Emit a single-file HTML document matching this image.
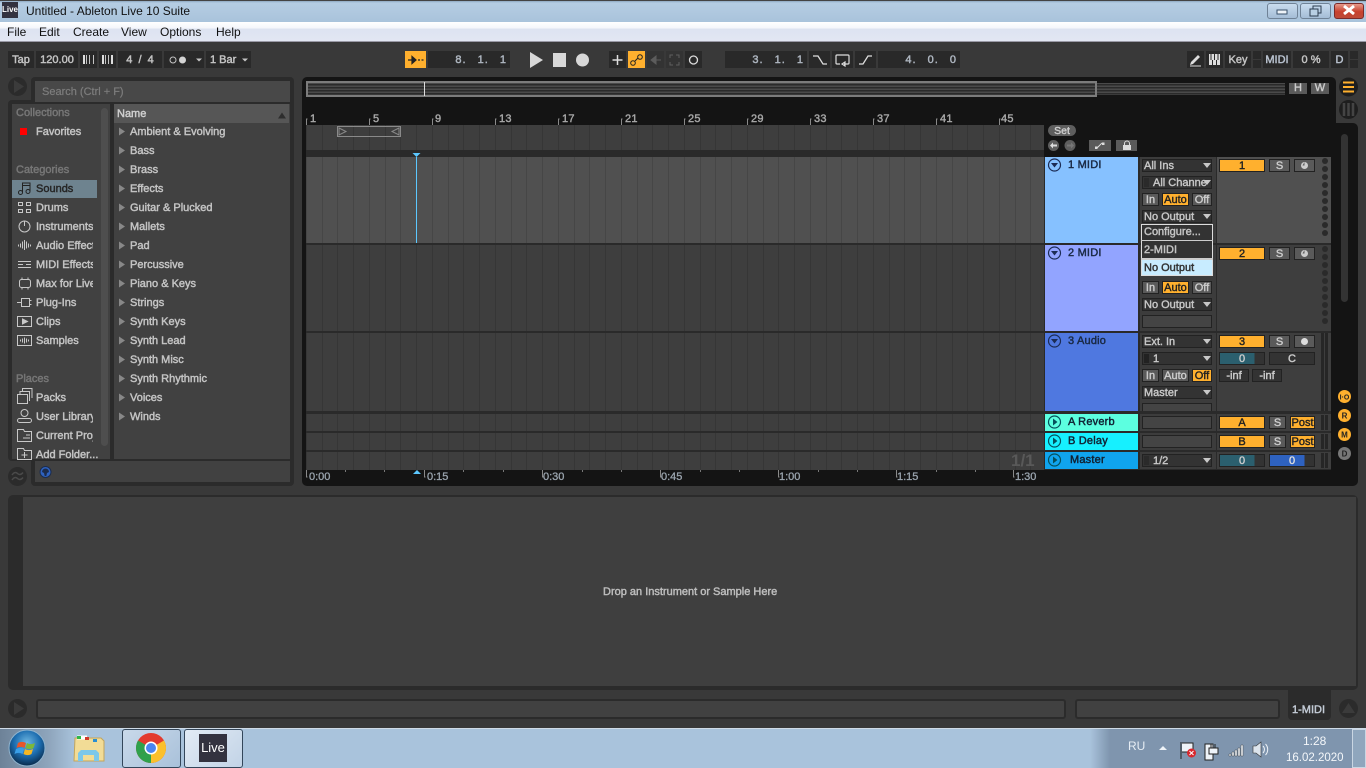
<!DOCTYPE html>
<html><head><meta charset="utf-8"><title>Untitled - Ableton Live 10 Suite</title>
<style>
html,body{margin:0;padding:0;width:1366px;height:768px;overflow:hidden;background:#393939;font-family:"Liberation Sans",sans-serif}
div,span.a{position:absolute;box-sizing:border-box}
.t{position:absolute;white-space:nowrap;font:11px/14px "Liberation Sans",sans-serif;-webkit-text-stroke:.45px;color:#c4c4c4;margin-top:1px}
.z{margin-top:0}
.k{position:absolute;box-sizing:border-box;background:#292929;color:#c4c4c4;font:11px/18px "Liberation Sans",sans-serif;-webkit-text-stroke:.45px;text-align:center;top:51px;height:17px;white-space:nowrap}
.m{position:absolute;white-space:nowrap;font:12px/16px "Liberation Sans",sans-serif;color:#111;top:24px}
.s{color:#9a9a9a}
.h{color:#777}
.b{position:absolute;box-sizing:border-box;height:13px;background:#5a5a5a;border:1px solid #222;color:#ccc;font:11px/12px "Liberation Sans",sans-serif;-webkit-text-stroke:.4px;text-align:center;white-space:nowrap;overflow:hidden}
.o{background:#ffb02e;color:#222}
.c{position:absolute;box-sizing:border-box;height:13px;background:#333;border:1px solid #222;color:#c8c8c8;font:11px/12px "Liberation Sans",sans-serif;-webkit-text-stroke:.4px;padding-left:1px;white-space:nowrap;overflow:hidden}
.g{background-image:repeating-linear-gradient(90deg,rgba(0,0,0,.12) 0 1px,transparent 1px 16px,rgba(0,0,0,.12) 16px 17px,transparent 17px 31px,rgba(0,0,0,.12) 31px 32px,transparent 32px 47px,rgba(0,0,0,.12) 47px 48px,transparent 48px 63px)}
.n{position:absolute;white-space:nowrap;font:11px/12px "Liberation Sans",sans-serif;-webkit-text-stroke:.45px;color:#1a2a44;letter-spacing:.2px}
.r{position:absolute;top:113px;font:11px/13px "Liberation Sans",sans-serif;-webkit-text-stroke:.4px;color:#a8a8a8;letter-spacing:.3px}
.l{position:absolute;top:470px;font:11px/14px "Liberation Sans",sans-serif;-webkit-text-stroke:.3px;color:#9aa4ae}
</style></head><body>

<!-- Window chrome -->
<div style="left:0;top:0;width:1366px;height:22px;background:linear-gradient(#8fa9c2 0,#b5cde3 2px,#a9c3db 100%);border-top:1px solid #444"></div>
<div style="left:0;top:22px;width:1366px;height:20px;background:linear-gradient(#fff 0,#f4f6fb 6px,#dde3f1 7px,#e2e7f3 100%);border-bottom:1px solid #9a9aa6"></div>
<div style="left:2px;top:2px;width:16px;height:16px;background:#33323f;color:#fff;font:bold 8px/16px 'Liberation Sans',sans-serif;text-align:center">Live</div>
<span class="m" style="left:26px;top:3px">Untitled - Ableton Live 10 Suite</span>
<span class="m" style="left:7px">File</span><span class="m" style="left:39px">Edit</span><span class="m" style="left:73px">Create</span><span class="m" style="left:121px">View</span><span class="m" style="left:160px">Options</span><span class="m" style="left:216px">Help</span>
<div style="left:1267px;top:3px;width:31px;height:16px;border:1px solid #6f8296;border-radius:3px;background:linear-gradient(#c9dcef,#a4bdd6)"></div>
<div style="left:1300px;top:3px;width:31px;height:16px;border:1px solid #6f8296;border-radius:3px;background:linear-gradient(#c9dcef,#a4bdd6)"></div>
<div style="left:1334px;top:3px;width:30px;height:16px;border:1px solid #7a2a2a;border-radius:3px;background:linear-gradient(#e59a8a,#c8402e 55%,#bd4a38)"></div>

<!-- Transport -->
<span class="k" style="left:8px;width:26px">Tap</span>
<span class="k" style="left:36px;width:42px">120.00</span>
<span class="k" style="left:80px;width:17px"></span>
<span class="k" style="left:99px;width:17px"></span>
<span class="k" style="left:118px;width:44px;word-spacing:3px">4 / 4</span>
<span class="k" style="left:164px;width:40px"></span>
<span class="k" style="left:206px;width:45px;text-align:left;padding-left:4px">1 Bar</span>
<span class="k" style="left:405px;width:21px;background:#ffb02e"></span>
<span class="k" style="left:428px;width:82px;text-align:right;padding-right:3px;letter-spacing:1px;word-spacing:7px;color:#aeb6c0">8. 1. 1</span>
<span class="k" style="left:609px;width:17px"></span>
<span class="k" style="left:628px;width:17px;background:#ffb02e"></span>
<span class="k" style="left:647px;width:17px;background:#333"></span>
<span class="k" style="left:666px;width:17px;background:#333"></span>
<span class="k" style="left:685px;width:17px"></span>
<span class="k" style="left:725px;width:82px;text-align:right;padding-right:3px;letter-spacing:1px;word-spacing:7px;color:#aeb6c0">3. 1. 1</span>
<span class="k" style="left:809px;width:21px"></span>
<span class="k" style="left:832px;width:21px"></span>
<span class="k" style="left:855px;width:21px"></span>
<span class="k" style="left:878px;width:82px;text-align:right;padding-right:3px;letter-spacing:1px;word-spacing:7px;color:#aeb6c0">4. 0. 0</span>
<span class="k" style="left:1187px;width:17px"></span>
<span class="k" style="left:1206px;width:17px"></span>
<span class="k" style="left:1225px;width:26px">Key</span>
<span class="k" style="left:1253px;width:8px;height:8px"></span>
<span class="k" style="left:1253px;top:60px;width:8px;height:8px"></span>
<span class="k" style="left:1263px;width:28px;color:#b9c2cf">MIDI</span>
<span class="k" style="left:1293px;width:36px">0 %</span>
<span class="k" style="left:1331px;width:17px;color:#b9c2cf">D</span>
<span class="k" style="left:1350px;width:8px;height:8px"></span>
<span class="k" style="left:1350px;top:60px;width:8px;height:8px"></span>

<!-- Browser -->
<div style="left:31px;top:77px;width:263px;height:30px;background:#2b2b2b;border-radius:4px 4px 0 0"></div>
<div style="left:8px;top:100px;width:286px;height:361px;background:#2b2b2b;border-radius:4px 0 0 4px"></div>
<div style="left:31px;top:455px;width:263px;height:31px;background:#2b2b2b;border-radius:0 0 4px 4px"></div>
<div style="left:35px;top:81px;width:255px;height:21px;background:#484848"></div>
<span class="t z" style="left:42px;top:85px;color:#7d7d7d;-webkit-text-stroke:.2px">Search (Ctrl + F)</span>
<div style="left:12px;top:104px;width:98px;height:355px;background:#414141"></div>
<div style="left:101px;top:108px;width:7px;height:338px;background:#4e4e4e;border-radius:4px"></div>
<div style="left:114px;top:104px;width:176px;height:355px;background:#414141"></div>
<div style="left:114px;top:104px;width:175px;height:19px;background:#565656"></div>
<div style="left:35px;top:461px;width:255px;height:21px;background:#414141"></div>
<div style="left:12px;top:180px;width:85px;height:18px;background:#6e838f"></div>
<span class="t" style="left:117px;top:106px;color:#cfcfcf">Name</span>
<span class="t h" style="left:16px;top:105px">Collections</span>
<span class="t" style="left:36px;top:124px">Favorites</span>
<span class="t h" style="left:16px;top:162px">Categories</span>
<span class="t" style="left:36px;top:181px;color:#262626">Sounds</span>
<span class="t" style="left:36px;top:200px">Drums</span>
<span class="t" style="left:36px;top:219px;width:57px;overflow:hidden">Instruments</span>
<span class="t" style="left:36px;top:238px;width:57px;overflow:hidden">Audio Effects</span>
<span class="t" style="left:36px;top:257px;width:57px;overflow:hidden">MIDI Effects</span>
<span class="t" style="left:36px;top:276px;width:57px;overflow:hidden">Max for Live</span>
<span class="t" style="left:36px;top:295px">Plug-Ins</span>
<span class="t" style="left:36px;top:314px">Clips</span>
<span class="t" style="left:36px;top:333px">Samples</span>
<span class="t h" style="left:16px;top:371px">Places</span>
<span class="t" style="left:36px;top:390px">Packs</span>
<span class="t" style="left:36px;top:409px;width:57px;overflow:hidden">User Library</span>
<span class="t" style="left:36px;top:428px;width:57px;overflow:hidden">Current Project</span>
<span class="t" style="left:36px;top:447px">Add Folder...</span>
<span class="t" style="left:130px;top:124px">Ambient &amp; Evolving</span>
<span class="t" style="left:130px;top:143px">Bass</span>
<span class="t" style="left:130px;top:162px">Brass</span>
<span class="t" style="left:130px;top:181px">Effects</span>
<span class="t" style="left:130px;top:200px">Guitar &amp; Plucked</span>
<span class="t" style="left:130px;top:219px">Mallets</span>
<span class="t" style="left:130px;top:238px">Pad</span>
<span class="t" style="left:130px;top:257px">Percussive</span>
<span class="t" style="left:130px;top:276px">Piano &amp; Keys</span>
<span class="t" style="left:130px;top:295px">Strings</span>
<span class="t" style="left:130px;top:314px">Synth Keys</span>
<span class="t" style="left:130px;top:333px">Synth Lead</span>
<span class="t" style="left:130px;top:352px">Synth Misc</span>
<span class="t" style="left:130px;top:371px">Synth Rhythmic</span>
<span class="t" style="left:130px;top:390px">Voices</span>
<span class="t" style="left:130px;top:409px">Winds</span>

<!-- Arrangement -->
<div style="left:302px;top:77px;width:1034px;height:409px;background:#141414;border-radius:5px"></div>
<div style="left:1320px;top:123px;width:38px;height:363px;background:#141414;border-radius:0 5px 5px 0"></div>
<div style="left:306px;top:150px;width:1025px;height:320px;background:#2a2a2a"></div>
<div style="left:1044px;top:125px;width:287px;height:32px;background:#141414"></div>
<div style="left:306px;top:83px;width:979px;height:12px;background:repeating-linear-gradient(#4a4a4a 0 1px,#2a2a2a 1px 2px,#3a3a3a 2px 3px)"></div>
<div style="left:306px;top:81px;width:791px;height:16px;border:2px solid #7c7c7c"></div>
<div style="left:424px;top:82px;width:1px;height:14px;background:#ddd"></div>
<div class="b" style="left:1289px;top:83px;width:18px;height:11px;line-height:10px;border:0">H</div>
<div class="b" style="left:1311px;top:83px;width:18px;height:11px;line-height:10px;border:0">W</div>
<span class="r" style="left:310px">1</span><span class="r" style="left:373px">5</span><span class="r" style="left:435px">9</span><span class="r" style="left:499px">13</span><span class="r" style="left:562px">17</span><span class="r" style="left:625px">21</span><span class="r" style="left:688px">25</span><span class="r" style="left:751px">29</span><span class="r" style="left:814px">33</span><span class="r" style="left:877px">37</span><span class="r" style="left:940px">41</span><span class="r" style="left:1001px">45</span>
<div class="g" style="left:306px;top:125px;width:738px;height:25px;background-color:#3e3e3e"></div>
<div class="g" style="left:306px;top:157px;width:738px;height:86px;background-color:#505050"></div>
<div class="g" style="left:306px;top:245px;width:738px;height:86px;background-color:#3e3e3e"></div>
<div class="g" style="left:306px;top:333px;width:738px;height:78px;background-color:#3e3e3e"></div>
<div class="g" style="left:306px;top:414px;width:738px;height:17px;background-color:#3e3e3e"></div>
<div class="g" style="left:306px;top:433px;width:738px;height:17px;background-color:#3e3e3e"></div>
<div class="g" style="left:306px;top:452px;width:738px;height:18px;background-color:#3e3e3e"></div>
<div style="left:337px;top:126px;width:64px;height:11px;border:1px solid #8a8a8a"></div>
<div style="left:416px;top:157px;width:1px;height:86px;background:#5cc8ff"></div>
<span class="t z" style="left:1011px;top:452px;font-size:17px;line-height:17px;font-weight:bold;-webkit-text-stroke:0;color:#595959">1/1</span>
<span class="l" style="left:309px">0:00</span><span class="l" style="left:427px">0:15</span><span class="l" style="left:543px">0:30</span><span class="l" style="left:661px">0:45</span><span class="l" style="left:779px">1:00</span><span class="l" style="left:897px">1:15</span><span class="l" style="left:1015px">1:30</span>

<!-- Scene/locators -->
<div style="left:1048px;top:125px;width:28px;height:11px;background:#5e5e5e;border-radius:6px;color:#ccc;font:10.5px/12px 'Liberation Sans',sans-serif;-webkit-text-stroke:.4px;text-align:center">Set</div>
<div style="left:1089px;top:140px;width:22px;height:11px;background:#5a5a5a"></div>
<div style="left:1116px;top:140px;width:21px;height:11px;background:#5a5a5a"></div>

<!-- Track heads -->
<div style="left:1045px;top:157px;width:93px;height:86px;background:#86c1ff"></div>
<div style="left:1045px;top:245px;width:93px;height:86px;background:#92a4ff"></div>
<div style="left:1045px;top:333px;width:93px;height:78px;background:#4f78e0"></div>
<div style="left:1045px;top:414px;width:93px;height:17px;background:#5cffe0"></div>
<div style="left:1045px;top:433px;width:93px;height:17px;background:#16f0ff"></div>
<div style="left:1045px;top:452px;width:93px;height:17px;background:#10a4ee"></div>
<span class="n" style="left:1068px;top:159px">1 MIDI</span>
<span class="n" style="left:1068px;top:247px">2 MIDI</span>
<span class="n" style="left:1068px;top:335px">3 Audio</span>
<span class="n" style="left:1068px;top:416px;color:#123">A Reverb</span>
<span class="n" style="left:1068px;top:435px;color:#123">B Delay</span>
<span class="n" style="left:1070px;top:454px;color:#123">Master</span>

<!-- Device/mixer columns -->
<div style="left:1140px;top:157px;width:76px;height:86px;background:#3c3c3c"></div>
<div style="left:1217px;top:157px;width:114px;height:86px;background:#505050"></div>
<div style="left:1140px;top:245px;width:76px;height:86px;background:#3c3c3c"></div>
<div style="left:1217px;top:245px;width:114px;height:86px;background:#3e3e3e"></div>
<div style="left:1140px;top:333px;width:76px;height:78px;background:#3c3c3c"></div>
<div style="left:1217px;top:333px;width:114px;height:78px;background:#3e3e3e"></div>
<div style="left:1140px;top:414px;width:76px;height:17px;background:#3c3c3c"></div>
<div style="left:1217px;top:414px;width:114px;height:17px;background:#3e3e3e"></div>
<div style="left:1140px;top:433px;width:76px;height:17px;background:#3c3c3c"></div>
<div style="left:1217px;top:433px;width:114px;height:17px;background:#3e3e3e"></div>
<div style="left:1140px;top:452px;width:76px;height:17px;background:#3c3c3c"></div>
<div style="left:1217px;top:452px;width:114px;height:17px;background:#3e3e3e"></div>

<!-- Track 1 -->
<div class="c" style="left:1142px;top:159px;width:70px">All Ins</div>
<div class="c" style="left:1142px;top:176px;width:70px;padding-left:10px">All Channe</div>
<div class="b" style="left:1142px;top:193px;width:17px">In</div>
<div class="b o" style="left:1162px;top:193px;width:27px">Auto</div>
<div class="b" style="left:1192px;top:193px;width:20px">Off</div>
<div class="c" style="left:1142px;top:210px;width:70px">No Output</div>
<div style="left:1141px;top:224px;width:72px;height:52px;background:#333;border:1px solid #ddd"></div>
<div style="left:1141px;top:240px;width:72px;height:1px;background:#ccc"></div>
<div style="left:1141px;top:258px;width:72px;height:2px;background:#ccc"></div>
<div style="left:1142px;top:260px;width:70px;height:15px;background:#c8ecff"></div>
<span class="t z" style="left:1144px;top:225px">Configure...</span>
<span class="t z" style="left:1144px;top:243px">2-MIDI</span>
<span class="t z" style="left:1144px;top:261px;color:#333">No Output</span>
<div class="b o" style="left:1219px;top:159px;width:46px">1</div>
<div class="b" style="left:1269px;top:159px;width:21px">S</div>
<div class="b" style="left:1294px;top:159px;width:21px"></div>
<!-- Track 2 -->
<div class="b" style="left:1142px;top:281px;width:17px">In</div>
<div class="b o" style="left:1162px;top:281px;width:27px">Auto</div>
<div class="b" style="left:1192px;top:281px;width:20px">Off</div>
<div class="c" style="left:1142px;top:298px;width:70px">No Output</div>
<div class="c" style="left:1142px;top:315px;width:70px;background:#444"></div>
<div class="b o" style="left:1219px;top:247px;width:46px">2</div>
<div class="b" style="left:1269px;top:247px;width:21px">S</div>
<div class="b" style="left:1294px;top:247px;width:21px"></div>
<!-- Track 3 -->
<div class="c" style="left:1142px;top:335px;width:70px">Ext. In</div>
<div class="c" style="left:1142px;top:352px;width:70px;padding-left:10px">1</div>
<div class="b" style="left:1142px;top:369px;width:17px">In</div>
<div class="b" style="left:1162px;top:369px;width:27px">Auto</div>
<div class="b o" style="left:1192px;top:369px;width:20px">Off</div>
<div class="c" style="left:1142px;top:386px;width:70px">Master</div>
<div class="c" style="left:1142px;top:403px;width:70px;height:8px;background:#444;border-bottom:0"></div>
<div class="b o" style="left:1219px;top:335px;width:46px">3</div>
<div class="b" style="left:1269px;top:335px;width:21px">S</div>
<div class="b" style="left:1294px;top:335px;width:21px"></div>
<div class="b" style="left:1219px;top:352px;width:46px;background:linear-gradient(90deg,#2b5f6e 0 78%,#333 78%)">0</div>
<div class="b" style="left:1269px;top:352px;width:46px;background:#333">C</div>
<div class="b" style="left:1219px;top:369px;width:30px;background:#333">-inf</div>
<div class="b" style="left:1252px;top:369px;width:30px;background:#333">-inf</div>
<!-- Returns -->
<div class="c" style="left:1142px;top:416px;width:70px;background:#444"></div>
<div class="c" style="left:1142px;top:435px;width:70px;background:#444"></div>
<div class="c" style="left:1142px;top:454px;width:70px;padding-left:10px">1/2</div>
<div class="b o" style="left:1219px;top:416px;width:46px">A</div>
<div class="b" style="left:1269px;top:416px;width:17px">S</div>
<div class="b o" style="left:1290px;top:416px;width:25px">Post</div>
<div class="b o" style="left:1219px;top:435px;width:46px">B</div>
<div class="b" style="left:1269px;top:435px;width:17px">S</div>
<div class="b o" style="left:1290px;top:435px;width:25px">Post</div>
<div class="b" style="left:1219px;top:454px;width:46px;background:linear-gradient(90deg,#2b5f6e 0 78%,#333 78%)">0</div>
<div class="b" style="left:1269px;top:454px;width:46px;background:linear-gradient(90deg,#2e62c0 0 78%,#333 78%);color:#ddd">0</div>
<!-- meters -->
<div style="left:1321px;top:333px;width:3px;height:78px;background:#262626"></div><div style="left:1325px;top:333px;width:3px;height:78px;background:#262626"></div>
<div style="left:1321px;top:415px;width:3px;height:15px;background:#262626"></div><div style="left:1325px;top:415px;width:3px;height:15px;background:#262626"></div>
<div style="left:1321px;top:434px;width:3px;height:15px;background:#262626"></div><div style="left:1325px;top:434px;width:3px;height:15px;background:#262626"></div>
<div style="left:1321px;top:453px;width:3px;height:15px;background:#262626"></div><div style="left:1325px;top:453px;width:3px;height:15px;background:#262626"></div>

<!-- Right strip -->
<div style="left:1341px;top:134px;width:7px;height:168px;background:#333;border-radius:4px"></div>

<!-- Detail -->
<div style="left:8px;top:495px;width:1350px;height:195px;background:#2b2b2b;border-radius:5px"></div>
<div style="left:23px;top:497px;width:1333px;height:189px;background:#3f3f3f"></div>
<span class="t" style="left:603px;top:584px;color:#bdbdbd">Drop an Instrument or Sample Here</span>
<div style="left:36px;top:699px;width:1030px;height:20px;background:#414141;border:2px solid #2b2b2b;border-radius:3px"></div>
<div style="left:1075px;top:699px;width:205px;height:20px;background:#414141;border:2px solid #2b2b2b;border-radius:3px"></div>
<div style="left:1288px;top:690px;width:43px;height:30px;background:#2b2b2b;border-radius:0 0 4px 4px"></div>
<span class="t" style="left:1292px;top:702px;color:#c3cbd6">1-MIDI</span>

<!-- Taskbar -->
<div style="left:0;top:728px;width:1366px;height:40px;background:linear-gradient(90deg,#6d8298 0,#8fa6bd 50px,#a9c3dc 75px,#a9c3dc 1090px,#7f95ae 1110px,#7f95ae 100%);border-top:1px solid #cfdbe7"></div>
<div style="left:122px;top:729px;width:59px;height:39px;border:1px solid #33465a;border-radius:3px;background:linear-gradient(135deg,#c9d9ea,#a9c1da)"></div>
<div style="left:184px;top:729px;width:59px;height:39px;border:1px solid #33465a;border-radius:3px;background:linear-gradient(135deg,#e2ebf5,#c2d3e6)"></div>
<div style="left:199px;top:734px;width:28px;height:28px;background:#33323f;color:#fff;font:13px/28px 'Liberation Sans',sans-serif;text-align:center">Live</div>
<span class="t z" style="left:1128px;top:739px;color:#e6edf4;-webkit-text-stroke:0;font-size:12px">RU</span>
<span class="t z" style="left:1303px;top:734px;color:#f4f7fa;-webkit-text-stroke:0;font-size:12px">1:28</span>
<span class="t z" style="left:1286px;top:751px;color:#f4f7fa;-webkit-text-stroke:0;font-size:11.500px">16.02.2020</span>
<div style="left:1352px;top:729px;width:14px;height:39px;border:1px solid #c9d6e3;background:#8fa6bd"></div>

<!-- Icons -->
<svg width="1366" height="768" viewBox="0 0 1366 768" style="position:absolute;left:0;top:0">
<defs>
<radialGradient id="orb" cx="50%" cy="35%" r="65%"><stop offset="0" stop-color="#6db6e0"/><stop offset=".55" stop-color="#1c6db0"/><stop offset="1" stop-color="#0a2a4a"/></radialGradient>
</defs>
<!-- window buttons -->
<rect x="1277" y="10" width="10" height="4" fill="#eef3f8" stroke="#38506a"/>
<rect x="1313" y="6" width="8" height="7" fill="none" stroke="#2c3d50"/><rect x="1310" y="9" width="8" height="7" fill="#b8cfe4" stroke="#2c3d50"/>
<path d="M1344 6l10 8M1354 6l-10 8" stroke="#fff" stroke-width="3"/>
<!-- transport -->
<g stroke="#c4c4c4" fill="none"><path d="M83.500 55v9M86.500 55v9M89.500 55v9M93.500 55v9M102.500 55v9M105.500 55v9M108.500 55v9M112.500 55v9"/></g>
<path d="M84 55v9M103 55v9M112 55v9" stroke="#ddd" stroke-width="2"/>
<circle cx="173" cy="60" r="3" fill="none" stroke="#c4c4c4"/><circle cx="182.500" cy="60" r="3.500" fill="#d4d4d4"/>
<path d="M196 58.500h6l-3 3zM242 58.500h6l-3 3z" fill="#c4c4c4"/>
<path d="M408 60h6M412 56.500l4 3.500-4 3.500zM418 60h2M421.500 60h2" stroke="#222" fill="#222" stroke-width="1.200"/>
<path d="M530 52l13 8-13 8z" fill="#d8d8d8"/>
<rect x="553" y="53" width="13" height="14" fill="#d8d8d8"/>
<circle cx="582.500" cy="60" r="6.500" fill="#d8d8d8"/>
<path d="M617.500 55v10M612.500 60h10" stroke="#ddd" stroke-width="1.500"/>
<circle cx="633" cy="63" r="2.300" fill="none" stroke="#222"/><circle cx="640" cy="57" r="2.300" fill="none" stroke="#222"/><path d="M635 61l3-3" stroke="#222"/>
<path d="M651 60h10M651 60l5-4v8z" stroke="#5c5c5c" fill="#5c5c5c"/>
<path d="M670 58v-3h3M679 58v-3h-3M670 62v3h3M679 62v3h-3" stroke="#5f5f5f" fill="none"/>
<circle cx="693.500" cy="60" r="4" fill="none" stroke="#ddd" stroke-width="1.300"/>
<path d="M813 56h5l5 8h4" stroke="#ddd" fill="none" stroke-width="1.300"/>
<path d="M840 64h-3a1 1 0 0 1-1-1v-7a1 1 0 0 1 1-1h11a1 1 0 0 1 1 1v7a1 1 0 0 1-1 1h-4M845 62l-3 2 3 2z" stroke="#ddd" fill="none" stroke-width="1.200"/>
<path d="M859 64h4l5-8h4" stroke="#ddd" fill="none" stroke-width="1.300"/>
<path d="M1191 62l7-7 2 2-7 7-3 1z" fill="#ddd"/><path d="M1190 66h11" stroke="#ddd"/>
<rect x="1209" y="54" width="11" height="11" fill="#ddd"/><path d="M1211 54v6M1214.500 54v6M1218 54v6M1212.500 60v5M1216.500 60v5" stroke="#292929"/>
<!-- browser -->
<circle cx="17.500" cy="86.500" r="9.500" fill="#2b2b2b"/><path d="M14 80l10 6.500-10 6.500z" fill="#3b3b3b"/>
<circle cx="17.500" cy="476.500" r="9.500" fill="#2b2b2b"/><path d="M12 475c2-3 4-3 5.500-1.500s3.500 1.500 5.500-1M12 480c2-3 4-3 5.500-1.500s3.500 1.500 5.500-1" stroke="#4a4a4a" fill="none" stroke-width="1.500"/>
<circle cx="45.500" cy="472" r="5.500" fill="#2e62c0" stroke="#1c2c4c"/><path d="M42 472a3.500 3.500 0 0 1 7 0l-2 1-.7 3h-1.600l-.7-3z" fill="#1c2c4c"/>
<rect x="20" y="128" width="7" height="7" fill="#f00"/>
<path d="M278 118.500l4-6 4 6z" fill="#2d2d2d"/>
<g fill="#888"><path d="M119 127.500l6 4-6 4zM119 146.500l6 4-6 4zM119 165.500l6 4-6 4zM119 184.500l6 4-6 4zM119 203.500l6 4-6 4zM119 222.500l6 4-6 4zM119 241.500l6 4-6 4zM119 260.500l6 4-6 4zM119 279.500l6 4-6 4zM119 298.500l6 4-6 4zM119 317.500l6 4-6 4zM119 336.500l6 4-6 4zM119 355.500l6 4-6 4zM119 374.500l6 4-6 4zM119 393.500l6 4-6 4zM119 412.500l6 4-6 4z"/></g>
<g fill="none" stroke="#c8c8c8">
<circle cx="20.500" cy="192.500" r="2" stroke="#222"/><circle cx="28" cy="191.500" r="2" stroke="#222"/><path d="M22.500 192v-9h7.500v8M22.500 185.500h7.500" stroke="#222"/>
<rect x="18.500" y="202.500" width="4" height="3"/><rect x="26.500" y="202.500" width="4" height="3"/><rect x="18.500" y="209.500" width="4" height="3"/><rect x="26.500" y="209.500" width="4" height="3"/>
<circle cx="24.500" cy="226.500" r="5.500"/><path d="M24.500 221v5"/>
<path d="M18.500 244.500v2M20.500 243.500v4M22.500 241.500v7M24.500 240v10M26.500 241.500v7M28.500 243.500v4M30.500 244.500v2"/>
<path d="M18 261.500h13M18 264.500h5M26 264.500h5M18 267.500h13"/>
<rect x="19.500" y="279.500" width="11" height="8" rx="2"/><path d="M22 279.500v-2M28 279.500v-2M22 287.500v2M28 287.500v2"/>
<path d="M17 302.500h4M21.500 298.500h8v8h-8zM29.500 300.500h2M29.500 304.500h2"/>
<rect x="17.500" y="316.500" width="14" height="10"/><path d="M22.500 319l5 2.500-5 2.500z" fill="#c8c8c8"/>
<rect x="17.500" y="335.500" width="14" height="10"/><path d="M20.500 339.500v2M22.500 338.500v4M24.500 337.500v6M26.500 338.500v4M28.500 339.500v2"/>
<rect x="17.500" y="394.500" width="10" height="9"/><path d="M20 394v-2.500h9.500V401M22.500 391v-2.500h9.500V398"/>
<circle cx="24.500" cy="413" r="3.500"/><rect x="17.500" y="418.500" width="14" height="4" rx="2"/>
<path d="M17.500 441.500v-12h6l1 2h7v10zM26 435h4M23 438h7"/>
<path d="M17.500 459.500v-11h6l1 2h7v9zM24.500 452v6M21.500 455h6"/>
</g>
<!-- ruler ticks -->
<g stroke="#8a8a8a" fill="none"><path d="M306.500 125v-6h1M369.500 125v-6h1M432.500 125v-6h1M495.500 125v-6h1M558.500 125v-6h1M621.500 125v-6h1M684.500 125v-6h1M747.500 125v-6h1M810.500 125v-6h1M873.500 125v-6h1M936.500 125v-6h1M999.500 125v-6h1"/>
<path d="M306.500 470v7h1M424.500 470v7h1M542.500 470v7h1M660.500 470v7h1M778.500 470v7h1M896.500 470v7h1M1013.500 470v7h1"/></g>
<path d="M345.500 470v2M384.500 470v2M463.500 470v2M503.500 470v2M582.500 470v2M621.500 470v2M700.500 470v2M739.500 470v2M818.500 470v2M857.500 470v2M936.500 470v2M975.500 470v2" stroke="#777"/>
<path d="M339 128l7 3.500-7 3.500zM399 128l-7 3.500 7 3.500z" fill="none" stroke="#8a8a8a"/>
<path d="M412.500 153h8l-4 4z" fill="#5cc8ff"/><path d="M413 474h8l-4-4z" fill="#5cc8ff"/>
<!-- set -->
<circle cx="1053.500" cy="145.500" r="5.500" fill="#5e5e5e"/><path d="M1050 145.500l3-3v2h4v2h-4v2z" fill="#ddd"/>
<circle cx="1070" cy="145.500" r="5.500" fill="#5e5e5e"/><path d="M1074 145.500l-3-3v2h-4v2h4v2z" fill="#777"/>
<path d="M1097 148l5-5" stroke="#ddd"/><rect x="1095" y="146.500" width="2.500" height="2.500" fill="#ddd"/><rect x="1102" y="142.500" width="2.500" height="2.500" fill="#ddd"/>
<rect x="1123" y="145" width="8" height="5" fill="#ddd"/><path d="M1124.500 145v-1.500a2.500 2.500 0 0 1 5 0v1.500" stroke="#ddd" fill="none"/>
<!-- track fold buttons -->
<g fill="none" stroke="#1c2c55" stroke-width="1.200">
<circle cx="1054.500" cy="165" r="6"/><circle cx="1054.500" cy="253" r="6"/><circle cx="1054.500" cy="341" r="6"/>
</g>
<g fill="#1c2c55"><path d="M1051 163h7l-3.500 4.500zM1051 251h7l-3.500 4.500zM1051 339h7l-3.500 4.500z"/></g>
<g fill="none" stroke="#05505c" stroke-width="1.200"><circle cx="1054.500" cy="422" r="6"/><circle cx="1054.500" cy="441" r="6"/><circle cx="1054.500" cy="460" r="6"/></g>
<g fill="#05505c"><path d="M1053 418.500l4.500 3.500-4.500 3.500zM1053 437.500l4.500 3.500-4.500 3.500zM1053 456.500l4.500 3.500-4.500 3.500z"/></g>
<!-- chooser arrows -->
<g fill="#c8c8c8"><path d="M1203 163h8l-4 5zM1203 180h8l-4 5zM1203 214h8l-4 5zM1203 302h8l-4 5zM1203 339h8l-4 5zM1203 356h8l-4 5zM1203 390h8l-4 5zM1203 458h8l-4 5z"/></g>
<rect x="1144" y="178" width="5" height="9" fill="#2a2a2a"/><rect x="1144" y="354" width="5" height="9" fill="#222"/><rect x="1144" y="456" width="5" height="9" fill="#2a2a2a"/>
<!-- arm icons -->
<circle cx="1304.500" cy="165.500" r="3.500" fill="#ccc"/><path d="M1304.500 165.500v-3.500l-2 3.500z" fill="#5a5a5a"/>
<circle cx="1304.500" cy="253.500" r="3.500" fill="#ccc"/><path d="M1304.500 253.500v-3.500l-2 3.500z" fill="#5a5a5a"/>
<circle cx="1304.500" cy="341.500" r="3.500" fill="#ddd"/>
<!-- dots -->
<g fill="#2a2a2a"><circle cx="1325" cy="161" r="3"/><circle cx="1325" cy="169" r="3"/><circle cx="1325" cy="177" r="3"/><circle cx="1325" cy="185" r="3"/><circle cx="1325" cy="193" r="3"/><circle cx="1325" cy="201" r="3"/><circle cx="1325" cy="209" r="3"/><circle cx="1325" cy="217" r="3"/><circle cx="1325" cy="225" r="3"/><circle cx="1325" cy="233" r="3"/>
<circle cx="1325" cy="249" r="3"/><circle cx="1325" cy="257" r="3"/><circle cx="1325" cy="265" r="3"/><circle cx="1325" cy="273" r="3"/><circle cx="1325" cy="281" r="3"/><circle cx="1325" cy="289" r="3"/><circle cx="1325" cy="297" r="3"/><circle cx="1325" cy="305" r="3"/><circle cx="1325" cy="313" r="3"/><circle cx="1325" cy="321" r="3"/></g>
<!-- right circles -->
<circle cx="1348.500" cy="87" r="9.500" fill="#1e1e1e"/><path d="M1343 82.500h11M1343 87h11M1343 91.500h11" stroke="#ffb02e" stroke-width="2"/>
<circle cx="1348.500" cy="109.500" r="9.500" fill="#1e1e1e"/><path d="M1344 103v13M1348.500 103v13M1353 103v13" stroke="#444" stroke-width="2.500"/>
<circle cx="1344.500" cy="396.500" r="6.500" fill="#ffb02e"/><circle cx="1344.500" cy="415.500" r="6.500" fill="#ffb02e"/><circle cx="1344.500" cy="434.500" r="6.500" fill="#ffb02e"/><circle cx="1344.500" cy="453.500" r="6.500" fill="#777"/>
<text x="1344.500" y="399.500" font-family="Liberation Sans" font-size="7" font-weight="bold" text-anchor="middle" fill="#222">I·O</text>
<text x="1344.500" y="418.500" font-family="Liberation Sans" font-size="8" font-weight="bold" text-anchor="middle" fill="#222">R</text>
<text x="1344.500" y="437.500" font-family="Liberation Sans" font-size="8" font-weight="bold" text-anchor="middle" fill="#222">M</text>
<text x="1344.500" y="456.500" font-family="Liberation Sans" font-size="8" font-weight="bold" text-anchor="middle" fill="#222">D</text>
<!-- bottom circles -->
<circle cx="17.500" cy="708.500" r="9.500" fill="#2b2b2b"/><path d="M14 702l10 6.500-10 6.500z" fill="#3b3b3b"/>
<circle cx="1348.500" cy="708.500" r="9.500" fill="#2b2b2b"/><path d="M1342 713l6.500-10 6.500 10z" fill="#3b3b3b"/>
<!-- taskbar icons -->
<circle cx="27" cy="748" r="18" fill="url(#orb)" stroke="#8fb4cf"/>
<path d="M18 743c2.500-1.500 5-1.500 8 0l-1.500 5c-2.500-1.500-5-1.500-8 0z" fill="#e8562a"/><path d="M27 743c2.500 1.500 5 1.500 8 0l-1.500 5c-2.500 1.500-5 1.500-8 0z" fill="#7cb83a"/><path d="M16 749c3-1.500 5.500-1.500 8 0l-1.500 5c-2.500-1.500-5-1.500-8 0z" fill="#3a9fe8"/><path d="M25 749c2.500 1.500 5 1.500 8 0l-1.500 5c-2.500 1.500-5 1.500-8 0z" fill="#f5b723"/>
<path d="M75 738h26l3 3v20H74z" fill="#f2dc96" stroke="#c2a55c"/><rect x="77" y="735.500" width="10" height="4" fill="#fff"/><rect x="77" y="736" width="4" height="3" fill="#2fb84a"/><rect x="85" y="737" width="4" height="3" fill="#d23a2a"/><rect x="93" y="739" width="4" height="3" fill="#2a8ed2"/>
<path d="M78 761v-8l3-3h15l3 3v8h-5v-6H83v6z" fill="#7cc8ea"/>
<circle cx="151" cy="748" r="15" fill="#e33b2e"/>
<path d="M151 748L138 755.500A15 15 0 0 0 151 763z" fill="#2fa14c"/><path d="M138 755.500A15 15 0 0 1 138 740.500L151 748z" fill="#2fa14c"/>
<path d="M151 748l13-7.500A15 15 0 0 1 151 763z" fill="#fbc02d"/>
<circle cx="151" cy="748" r="6.500" fill="#fff"/><circle cx="151" cy="748" r="5" fill="#4a85f0"/>
<path d="M1159 750h8l-4-4z" fill="#eef3f8"/>
<path d="M1181 742v17M1182 743h11v9h-11" fill="#eef3f8" stroke="#222"/><circle cx="1191.500" cy="753" r="4.500" fill="#d8262c"/><path d="M1189.500 751l4 4M1193.500 751l-4 4" stroke="#fff"/>
<path d="M1205 744h8v16h-8z" fill="#eef3f8" stroke="#222"/><path d="M1209 748h9v6h-9zM1211 744v4M1215 744v4M1213 754v4" fill="#eef3f8" stroke="#222"/>
<path d="M1229 754h2v2h-2zM1232 752h2v4h-2zM1235 750h2v6h-2zM1238 748h2v8h-2zM1241 745h2v11h-2z" fill="#eef3f8" stroke="#333" stroke-width=".4"/>
<path d="M1253 746h3l5-4v15l-5-4h-3z" fill="#dce4ec" stroke="#333" stroke-width=".6"/><path d="M1263 746a5 5 0 0 1 0 7M1265.500 744a8 8 0 0 1 0 11" stroke="#eef3f8" fill="none"/>
</svg>
</body></html>
